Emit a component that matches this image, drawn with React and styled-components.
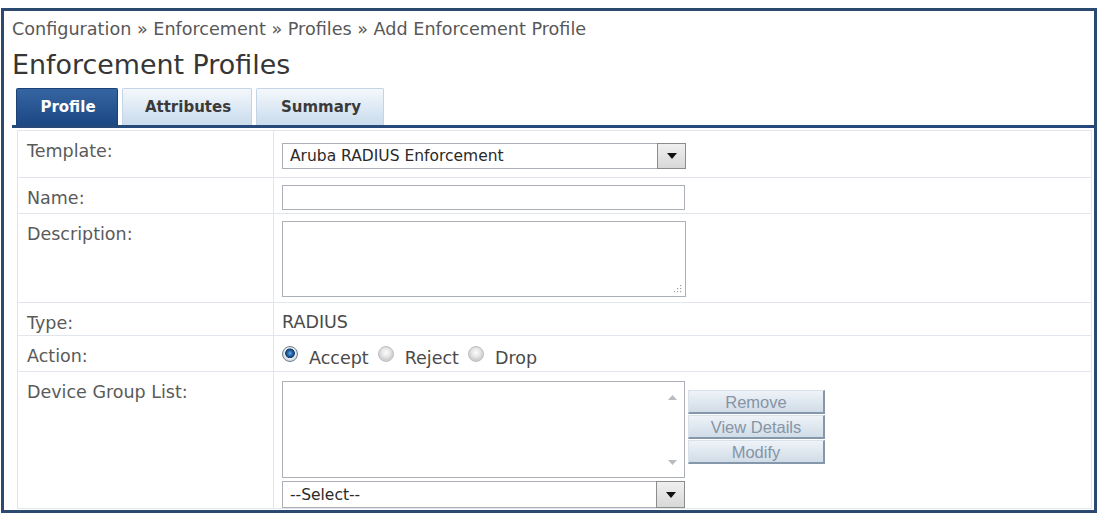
import React from "react";
import styled, { createGlobalStyle } from "styled-components";

const GlobalStyle = createGlobalStyle`
  html, body { margin: 0; padding: 0; background: #ffffff; }
  body { font-family: "DejaVu Sans", Verdana, sans-serif; }
`;

const Page = styled.div`
  padding: 8px 0 0 1px;
  width: 1096px;
`;

const Frame = styled.div`
  box-sizing: border-box;
  width: 1096px;
  border: 3px solid #2c4a6f;
  padding: 8px 0 1px 8px;
  background: #ffffff;
`;

const Breadcrumb = styled.div`
  font-size: 17.6px;
  line-height: 20px;
  color: #585858;
`;

const Title = styled.h1`
  margin: 10px 0 0;
  font-size: 26.9px;
  line-height: 32px;
  font-weight: normal;
  color: #363636;
`;

const TabStrip = styled.div`
  display: flex;
  gap: 4px;
  margin-top: 7px;
  padding-left: 4px;
  border-bottom: 3px solid #24497a;
`;

const Tab = styled.div`
  box-sizing: border-box;
  width: ${(p) => p.$w}px;
  height: 37px;
  display: flex;
  align-items: center;
  justify-content: center;
  padding-left: 2px;
  font-size: 15px;
  font-weight: bold;
  border: 1px solid ${(p) => (p.$active ? "#1c4278" : "#c4d4e4")};
  border-bottom: none;
  border-radius: 2px 2px 0 0;
  background: ${(p) =>
    p.$active
      ? "linear-gradient(#3565a1, #1c4884)"
      : "linear-gradient(#f4f8fc, #c9dbed)"};
  color: ${(p) => (p.$active ? "#ffffff" : "#3a3a3a")};
`;

const Table = styled.div`
  margin: 2px 2px 0 5px;
  border: 1px solid #e0e6ec;
  border-bottom: none;
`;

const Row = styled.div`
  display: grid;
  grid-template-columns: 256px 1fr;
  box-sizing: border-box;
  height: ${(p) => p.$h}px;
  border-bottom: 1px solid #e0e6ec;
`;

const Label = styled.div`
  border-right: 1px solid #e0e6ec;
  padding: 10px 9px;
  font-size: 17.5px;
  line-height: 20px;
  color: #5a5a5a;
`;

const Value = styled.div`
  padding: ${(p) => p.$top ?? 7}px 8px 0;
  font-size: 17.5px;
  line-height: 20px;
  color: #4a4a4a;
`;

const Select = styled.div`
  box-sizing: border-box;
  width: ${(p) => p.$w || 404}px;
  height: ${(p) => p.$h || 26}px;
  display: flex;
  align-items: stretch;
  border: 1px solid #aab0b6;
  background: #ffffff;
  font-size: 15.5px;
  color: #2a2a2a;
`;

const SelectText = styled.span`
  flex: 1;
  display: flex;
  align-items: center;
  padding-left: 7px;
`;

const SelectArrow = styled.span`
  box-sizing: border-box;
  width: 29px;
  margin: -1px -1px -1px 0;
  display: flex;
  align-items: center;
  justify-content: center;
  border: 1px solid #8c8c8c;
  background: linear-gradient(#f0f0f0, #d8d8d8);
`;

const TextInput = styled.div`
  box-sizing: border-box;
  width: 403px;
  height: 25px;
  border: 1px solid #aab0b6;
  background: #ffffff;
`;

const TextArea = styled.div`
  box-sizing: border-box;
  width: 404px;
  height: 76px;
  border: 1px solid #aab0b6;
  background: #ffffff;
  display: flex;
  justify-content: flex-end;
  align-items: flex-end;
  padding: 0 3px 3px 0;
`;

const RadioGroup = styled.div`
  display: flex;
  align-items: flex-start;
`;

const RadioOption = styled.label`
  display: flex;
  align-items: flex-start;
  gap: 11px;
  margin-right: 9px;
  color: #4a4a4a;
`;

const RadioMark = styled.span`
  box-sizing: border-box;
  flex: none;
  width: 16px;
  height: 16px;
  border-radius: 50%;
  border: 1px solid ${(p) => (p.$checked ? "#6f7f8f" : "#b9c0c6")};
  background: ${(p) =>
    p.$checked
      ? "radial-gradient(circle at 50% 45%, #6aaee8 0, #2466a8 2.5px, #123e6e 4.5px, #eef2f5 5.2px, #d2d9df 7px)"
      : "radial-gradient(circle at 50% 40%, #fbfbfb 0, #e8e8e8 4px, #d0d0d0 7px)"};
`;

const RadioText = styled.span`
  margin-top: 2px;
`;

const DeviceArea = styled.div`
  display: flex;
  align-items: flex-start;
`;

const ListColumn = styled.div`
  display: flex;
  flex-direction: column;
  gap: 3px;
  width: 403px;
`;

const ListBox = styled.div`
  box-sizing: border-box;
  height: 97px;
  border: 1px solid #aab0b6;
  background: #ffffff;
  display: flex;
  justify-content: flex-end;
`;

const ScrollColumn = styled.div`
  width: 24px;
  display: flex;
  flex-direction: column;
  justify-content: space-between;
  align-items: center;
  padding: 13px 0 12px;
`;

const ButtonColumn = styled.div`
  display: flex;
  flex-direction: column;
  gap: 1px;
  margin: 9px 0 0 3px;
`;

const ActionButton = styled.div`
  box-sizing: border-box;
  width: 137px;
  height: 24px;
  display: flex;
  align-items: center;
  justify-content: center;
  font-family: "Liberation Sans", Arial, sans-serif;
  font-size: 16.5px;
  color: #8694a5;
  background: linear-gradient(#eef3f8, #d0dce7);
  border: 1px solid #d8e1ea;
  border-right: 2px solid #8597ab;
  border-bottom: 2px solid #8597ab;
`;

const DownTriangle = () => (
  <svg width="10" height="6" viewBox="0 0 10 6">
    <path d="M0 0H10L5 6Z" fill="#111111" />
  </svg>
);

const ScrollArrow = ({ up }) => (
  <svg width="9" height="5" viewBox="0 0 9 5">
    <path d={up ? "M0 5H9L4.5 0Z" : "M0 0H9L4.5 5Z"} fill="#b8bcc0" />
  </svg>
);

const ResizeGrip = () => (
  <svg width="9" height="9" viewBox="0 0 9 9">
    <g fill="#a0a0a0">
      <rect x="7" y="1" width="1.2" height="1.2" />
      <rect x="4" y="4" width="1.2" height="1.2" />
      <rect x="7" y="4" width="1.2" height="1.2" />
      <rect x="1" y="7" width="1.2" height="1.2" />
      <rect x="4" y="7" width="1.2" height="1.2" />
      <rect x="7" y="7" width="1.2" height="1.2" />
    </g>
  </svg>
);

const tabs = [
  { name: "Profile", width: 102, active: true },
  { name: "Attributes", width: 130 },
  { name: "Summary", width: 128 },
];

const actions = [
  { name: "Accept", checked: true },
  { name: "Reject" },
  { name: "Drop" },
];

export default function App() {
  return (
    <Page>
      <GlobalStyle />
      <Frame>
        <Breadcrumb>
          Configuration » Enforcement » Profiles » Add Enforcement Profile
        </Breadcrumb>
        <Title>Enforcement Profiles</Title>
        <TabStrip>
          {tabs.map((t) => (
            <Tab key={t.name} $w={t.width} $active={t.active}>
              {t.name}
            </Tab>
          ))}
        </TabStrip>
        <Table>
          <Row $h={47}>
            <Label>Template:</Label>
            <Value $top={12}>
              <Select>
                <SelectText>Aruba RADIUS Enforcement</SelectText>
                <SelectArrow>
                  <DownTriangle />
                </SelectArrow>
              </Select>
            </Value>
          </Row>
          <Row $h={36}>
            <Label>Name:</Label>
            <Value $top={7}>
              <TextInput />
            </Value>
          </Row>
          <Row $h={89}>
            <Label>Description:</Label>
            <Value $top={7}>
              <TextArea>
                <ResizeGrip />
              </TextArea>
            </Value>
          </Row>
          <Row $h={33}>
            <Label>Type:</Label>
            <Value $top={9}>RADIUS</Value>
          </Row>
          <Row $h={36}>
            <Label>Action:</Label>
            <Value $top={10}>
              <RadioGroup>
                {actions.map((a) => (
                  <RadioOption key={a.name}>
                    <RadioMark $checked={a.checked} />
                    <RadioText>{a.name}</RadioText>
                  </RadioOption>
                ))}
              </RadioGroup>
            </Value>
          </Row>
          <Row $h={137}>
            <Label>Device Group List:</Label>
            <Value $top={9}>
              <DeviceArea>
                <ListColumn>
                  <ListBox>
                    <ScrollColumn>
                      <ScrollArrow up />
                      <ScrollArrow />
                    </ScrollColumn>
                  </ListBox>
                  <Select $w={403} $h={27}>
                    <SelectText>--Select--</SelectText>
                    <SelectArrow>
                      <DownTriangle />
                    </SelectArrow>
                  </Select>
                </ListColumn>
                <ButtonColumn>
                  <ActionButton>Remove</ActionButton>
                  <ActionButton>View Details</ActionButton>
                  <ActionButton>Modify</ActionButton>
                </ButtonColumn>
              </DeviceArea>
            </Value>
          </Row>
        </Table>
      </Frame>
    </Page>
  );
}
